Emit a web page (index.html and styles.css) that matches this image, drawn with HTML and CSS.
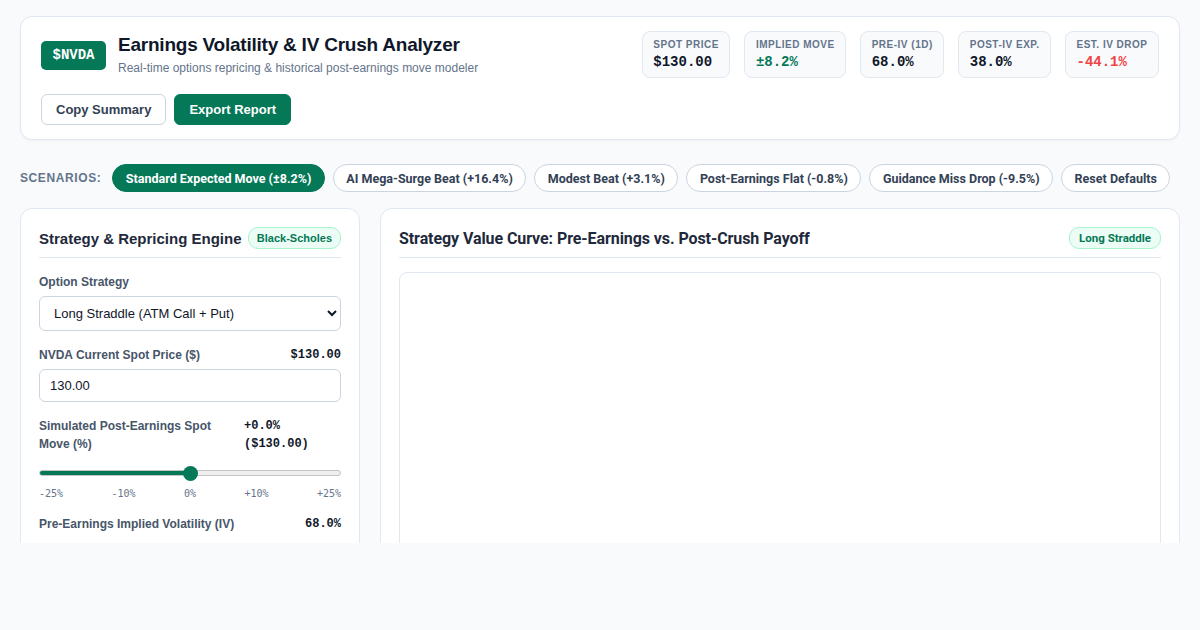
FILE: index.html
```html
<!DOCTYPE html>
<html lang="en">
<head>
<meta charset="utf-8">
<title>Earnings Volatility &amp; IV Crush Analyzer</title>
<link rel="stylesheet" href="styles.css">
</head>
<body>
<div class="app">
  <header class="hero">
    <div class="hero-top">
      <div class="brand">
        <div class="logo">$NVDA</div>
        <div class="brand-text">
          <h1 class="title">Earnings Volatility &amp; IV Crush Analyzer</h1>
          <p class="subtitle">Real-time options repricing &amp; historical post-earnings move modeler</p>
        </div>
      </div>
      <div class="stats">
        <div class="stat"><div class="stat-label">Spot Price</div><div class="stat-value">$130.00</div></div>
        <div class="stat"><div class="stat-label">Implied Move</div><div class="stat-value green">±8.2%</div></div>
        <div class="stat"><div class="stat-label">Pre-IV (1D)</div><div class="stat-value">68.0%</div></div>
        <div class="stat"><div class="stat-label">Post-IV Exp.</div><div class="stat-value">38.0%</div></div>
        <div class="stat"><div class="stat-label">Est. IV Drop</div><div class="stat-value red">-44.1%</div></div>
      </div>
    </div>
    <div class="actions">
      <button class="btn btn-outline">Copy Summary</button>
      <button class="btn btn-primary">Export Report</button>
    </div>
  </header>

  <div class="scenarios">
    <span class="scen-label">Scenarios:</span>
    <button class="pill active">Standard Expected Move (±8.2%)</button>
    <button class="pill">AI Mega-Surge Beat (+16.4%)</button>
    <button class="pill">Modest Beat (+3.1%)</button>
    <button class="pill">Post-Earnings Flat (-0.8%)</button>
    <button class="pill">Guidance Miss Drop (-9.5%)</button>
    <button class="pill">Reset Defaults</button>
  </div>

  <div class="grid">
    <section class="panel">
      <div class="panel-head">
        <h2 class="panel-title">Strategy &amp; Repricing Engine</h2>
        <span class="badge">Black-Scholes</span>
      </div>
      <div class="field">
        <label class="label">Option Strategy</label>
        <select class="control select">
          <option>Long Straddle (ATM Call + Put)</option>
        </select>
      </div>
      <div class="field">
        <div class="label-row">
          <label class="label">NVDA Current Spot Price ($)</label>
          <span class="mono-val">$130.00</span>
        </div>
        <input class="control input" type="text" value="130.00">
      </div>
      <div class="field">
        <div class="label-row">
          <label class="label">Simulated Post-Earnings Spot Move (%)</label>
          <span class="mono-val wrap">+0.0% ($130.00)</span>
        </div>
        <input class="range" type="range" min="-25" max="25" value="0">
        <div class="ticks"><span>-25%</span><span>-10%</span><span>0%</span><span>+10%</span><span>+25%</span></div>
      </div>
      <div class="field last">
        <div class="label-row">
          <label class="label">Pre-Earnings Implied Volatility (IV)</label>
          <span class="mono-val">68.0%</span>
        </div>
      </div>
    </section>

    <section class="panel">
      <div class="panel-head">
        <h2 class="panel-title alt">Strategy Value Curve: Pre-Earnings vs. Post-Crush Payoff</h2>
        <span class="badge alt">Long Straddle</span>
      </div>
      <div class="chart"></div>
    </section>
  </div>
</div>
</body>
</html>
```

FILE: styles.css
```css
* { box-sizing: border-box; }

html, body {
  margin: 0;
  padding: 0;
  background: #f8fafc;
}

body {
  font-family: "Liberation Sans", Arial, sans-serif;
  color: #0f172a;
}

.app {
  height: 543px;
  overflow: hidden;
  padding: 16px 20px 0;
}

/* Header */
.hero {
  background: #fff;
  border: 1px solid #e2e8f0;
  border-radius: 12px;
  padding: 14px 20px 14px;
  box-shadow: 0 1px 2px rgba(15, 23, 42, 0.04);
}

.hero-top {
  display: flex;
  justify-content: space-between;
  align-items: center;
}

.brand {
  display: flex;
  align-items: center;
  gap: 12px;
}

.logo {
  background: #047857;
  color: #fff;
  font-family: "Liberation Mono", monospace;
  font-weight: 700;
  font-size: 14px;
  height: 29px;
  line-height: 29px;
  padding: 0 11px;
  border-radius: 5px;
  margin-top: 2px;
  min-width: 65px;
  text-align: center;
}

.title {
  margin: 0;
  font-size: 19px;
  font-weight: 700;
  letter-spacing: -0.012em;
  color: #0f172a;
  line-height: 23px;
}

.subtitle {
  margin: 5px 0 0;
  font-size: 12px;
  color: #64748b;
  line-height: 15px;
}

.stats {
  display: flex;
  gap: 14px;
}

.stat {
  background: #f8fafc;
  border: 1px solid #e2e8f0;
  border-radius: 8px;
  padding: 7px 10.5px 6px;
}

.stat-label {
  font-size: 10px;
  font-weight: 700;
  text-transform: uppercase;
  letter-spacing: 0.05em;
  color: #64748b;
  line-height: 12px;
}

.stat-value {
  font-family: "Liberation Mono", monospace;
  font-weight: 700;
  font-size: 14px;
  line-height: 17px;
  margin-top: 3px;
  color: #0f172a;
}

.green { color: #047857; }
.red { color: #ef4444; }

.actions {
  display: flex;
  gap: 8px;
  margin-top: 16px;
}

.btn {
  font-family: "Liberation Sans", Arial, sans-serif;
  font-size: 13px;
  font-weight: 700;
  height: 31px;
  padding: 0 14px;
  border-radius: 6px;
  cursor: pointer;
}

.btn-outline {
  background: #fff;
  border: 1px solid #cbd5e1;
  color: #334155;
}

.btn-primary {
  background: #047857;
  border: 1px solid #047857;
  color: #fff;
}

/* Scenarios */
.scenarios {
  display: flex;
  align-items: center;
  gap: 8px;
  margin-top: 24px;
}

.scen-label {
  font-size: 12px;
  font-weight: 700;
  text-transform: uppercase;
  letter-spacing: 0.05em;
  color: #64748b;
  margin-right: 3px;
}

.pill {
  font-family: Roboto, "Liberation Sans", sans-serif;
  font-size: 12.5px;
  font-weight: 700;
  height: 28px;
  padding: 0 12.5px;
  border-radius: 999px;
  border: 1px solid #cbd5e1;
  background: #fff;
  color: #334155;
  cursor: pointer;
}

.pill.active {
  background: #047857;
  border-color: #047857;
  color: #fff;
}

/* Panels */
.grid {
  display: grid;
  grid-template-columns: 340px 1fr;
  gap: 20px;
  margin-top: 16px;
}

.panel {
  background: #fff;
  border: 1px solid #e2e8f0;
  border-radius: 12px;
  padding: 18px;
  min-height: 400px;
}

.panel-head {
  display: flex;
  justify-content: space-between;
  align-items: center;
  padding-bottom: 8px;
  border-bottom: 1px solid #e2e8f0;
}

.panel-title {
  margin: 0;
  font-size: 15px;
  font-weight: 700;
  color: #1e293b;
  white-space: nowrap;
}

.panel-title.alt {
  font-family: Roboto, "Liberation Sans", sans-serif;
  font-size: 16px;
  letter-spacing: -0.005em;
}

.badge {
  display: inline-flex;
  align-items: center;
  height: 22px;
  padding: 0 8px;
  border: 1px solid #a7f3d0;
  background: #ecfdf5;
  color: #047857;
  font-size: 11px;
  font-weight: 700;
  border-radius: 10px;
  white-space: nowrap;
}

.badge.alt {
  font-family: Roboto, "Liberation Sans", sans-serif;
  font-size: 11.5px;
  padding: 0 9px;
}

.field {
  margin-top: 15px;
}

.field.last {
  margin-top: 16px;
}

.label {
  display: block;
  font-size: 12px;
  font-weight: 700;
  color: #475569;
  line-height: 18px;
  margin-bottom: 5px;
}

.label-row {
  display: flex;
  justify-content: space-between;
  gap: 12px;
  margin-bottom: 5px;
}

.label-row .label {
  margin-bottom: 0;
}

.mono-val {
  font-family: "Liberation Mono", monospace;
  font-size: 12px;
  font-weight: 700;
  color: #0f172a;
  line-height: 18px;
  white-space: nowrap;
}

.mono-val.wrap {
  white-space: normal;
  width: 97px;
  flex-shrink: 0;
}

.control {
  display: block;
  width: 100%;
  font-family: "Liberation Sans", Arial, sans-serif;
  font-size: 13px;
  color: #0f172a;
  background: #fff;
  border: 1px solid #cbd5e1;
  border-radius: 6px;
}

.select {
  height: 35px;
  padding: 0 8px 0 10px;
}

.input {
  height: 33px;
  padding: 0 10px;
}

.range {
  -webkit-appearance: none;
  appearance: none;
  display: block;
  width: 100%;
  height: 6px;
  margin: 17px 0 0;
  border-radius: 3px;
  border: 1px solid #c4c4c4;
  background: linear-gradient(to right, #047857 0%, #047857 50%, #efefef 50%, #efefef 100%);
}

.range::-webkit-slider-thumb {
  -webkit-appearance: none;
  appearance: none;
  width: 15px;
  height: 15px;
  border-radius: 50%;
  background: #047857;
  border: none;
}

.ticks {
  display: flex;
  justify-content: space-between;
  margin-top: 12px;
  font-family: "DejaVu Sans Mono", monospace;
  font-size: 10px;
  color: #64748b;
}

.chart {
  margin-top: 14px;
  height: 400px;
  border: 1px solid #e2e8f0;
  border-radius: 8px;
  background: #fff;
}
```
